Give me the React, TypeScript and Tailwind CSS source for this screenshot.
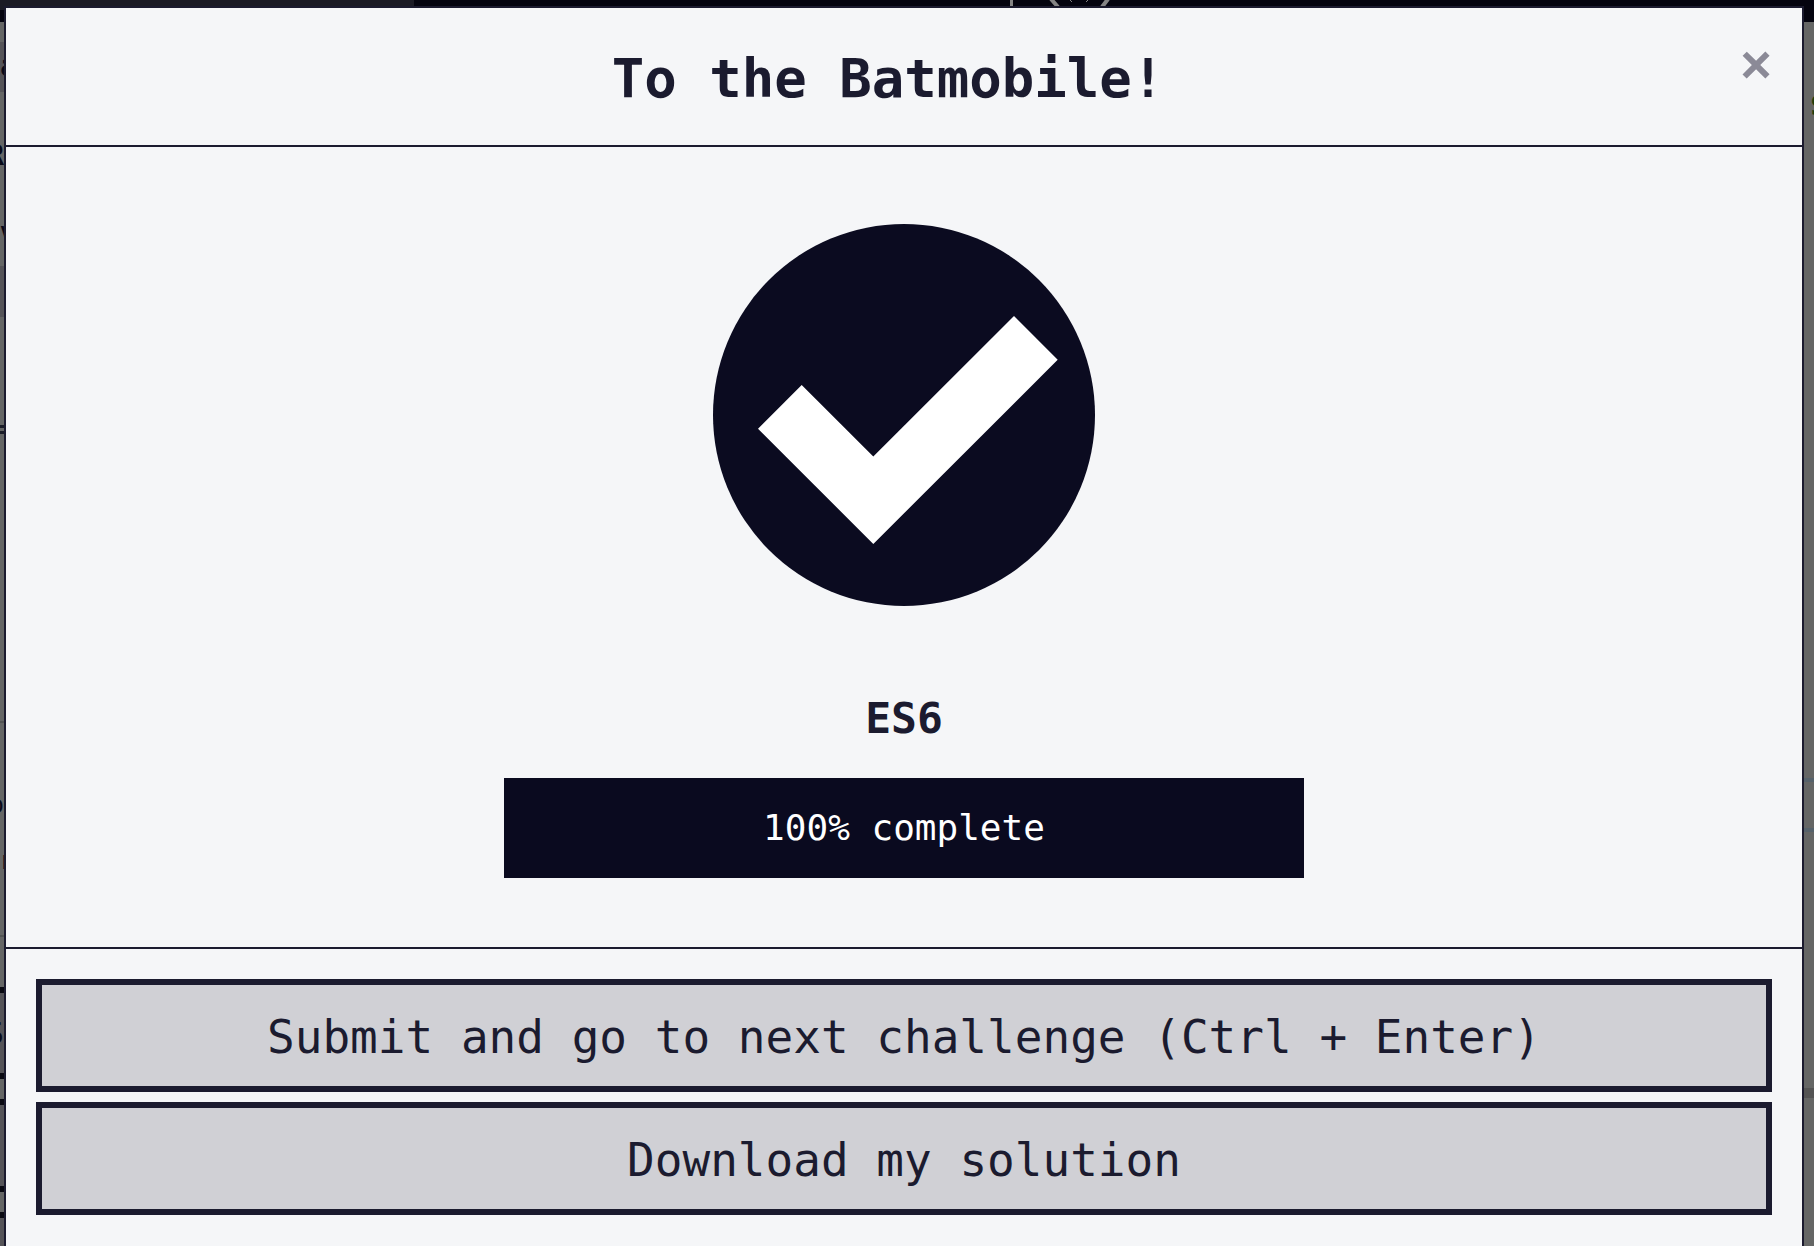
const actionClass =
  'w-full border-[6px] border-[#1b1b2f] bg-[#d0d0d5] pt-[3px] text-center text-[46px] leading-[98px] text-[#1b1b2f]';

function SiteBackdrop() {
  return (
    <div aria-hidden="true" className="absolute inset-0 flex flex-col bg-[#656665]">
      <div className="flex h-[22px] shrink-0 items-start bg-[#04040f]">
        <div className="h-[10px] w-[414px] bg-[#1b1b25]" />
        <svg className="ml-[590px] h-[10px] w-[120px]" viewBox="0 0 120 10" fill="none" stroke="#858585">
          <path d="M7.5 0V10" strokeWidth="3" />
          <path d="M47 -1L54 7M104 -1L98 7" strokeWidth="4" />
          <path d="M66 0L68 2M82 2L84 0" strokeWidth="1" />
        </svg>
      </div>
      <div className="flex grow justify-between">
        <div className="flex w-1 flex-col overflow-hidden text-[#0a0a18]">
          <div className="mt-5 h-[50px] bg-[#555458] text-[30px] font-bold leading-[48px]">a</div>
          <div className="flex h-[174px] flex-col items-end text-[28px] font-bold">
            <span className="mt-[44px] leading-[40px]">R</span>
            <span className="mt-[34px] self-start text-[20px] leading-[40px]">v</span>
          </div>
          <div className="h-[51px] bg-[#555458]" />
          <div className="mt-[108px] h-[9px] border-y-[3px] border-[#1b1d28]" />
          <div className="mt-[287px] h-[2px] bg-[#525453]" />
          <div className="flex h-[212px] flex-col items-end text-[24px]">
            <span className="mt-[62px] leading-[40px]">o</span>
            <span className="mt-[16px] self-start leading-[40px] font-bold">r</span>
          </div>
          <div className="h-[2px] bg-[#525453]" />
          <div className="mt-[50px] flex h-[92px] flex-col items-end justify-center border-y-[6px] border-[#0a0a12] bg-[#555458] text-[32px]">
            <span>S</span>
          </div>
          <div className="mt-5 h-[93px] border-y-[6px] border-[#0a0a12] bg-[#555458]" />
          <div className="mt-5 h-[92px] border-y-[6px] border-[#0a0a12] bg-[#555458]" />
        </div>
        <div className="flex w-[10px] flex-col overflow-hidden">
          <div className="mt-[62px] h-[50px] pl-[5px] text-[36px] leading-[38px] font-bold text-[#1d3d0c]">s</div>
          <div className="mt-[644px] h-[54px] border-y-4 border-[#56626b]" />
          <div className="mt-[256px] h-[10px] bg-[#545454]" />
        </div>
      </div>
    </div>
  );
}

export default function App() {
  return (
    <div className="relative h-screen overflow-hidden font-['DejaVu_Sans_Mono',monospace]">
      <SiteBackdrop />
      <div
        role="dialog"
        aria-labelledby="dialog-title"
        className="relative mt-[6px] mr-[10px] ml-1 border-2 border-[#1b1b2f] bg-[#f5f6f8] text-[#1b1b2f]"
      >
        <header className="flex items-start border-b-2 border-[#1b1b2f] px-[30px] pt-8 pb-7">
          <h1 id="dialog-title" className="grow text-center text-[54px] leading-[77px] font-bold">
            To the Batmobile!
          </h1>
          <button
            type="button"
            aria-label="Close"
            className="w-8 text-center font-['Liberation_Sans',sans-serif] text-[54px] leading-[48px] font-bold text-[#8b8a97]"
          >
            ×
          </button>
        </header>

        <main className="flex flex-col items-center border-b-2 border-[#1b1b2f] px-[30px] pt-[77px] pb-[69px]">
          <svg className="size-[382px]" viewBox="0 0 382 382" role="img" aria-label="Passed">
            <circle cx="191" cy="191" r="191" fill="#0b0b20" />
            <path d="M45 204.7L88.7 161L160.3 232.4L301 92L344.7 135.7L160.3 320Z" fill="#fff" />
          </svg>
          <h2 className="mt-[82px] text-[43px] leading-[60px] font-bold">ES6</h2>
          <div
            role="progressbar"
            aria-valuenow={100}
            aria-valuemin={0}
            aria-valuemax={100}
            className="mt-[30px] w-full max-w-[800px] bg-[#0a0a1f] text-center text-[36px] leading-[100px] text-white"
          >
            100% complete
          </div>
        </main>

        <footer className="flex flex-col gap-[10px] px-[30px] pt-[30px] pb-8">
          <button type="button" className={actionClass}>
            Submit and go to next challenge (Ctrl + Enter)
          </button>
          <button type="button" className={actionClass}>
            Download my solution
          </button>
        </footer>
      </div>
    </div>
  );
}
